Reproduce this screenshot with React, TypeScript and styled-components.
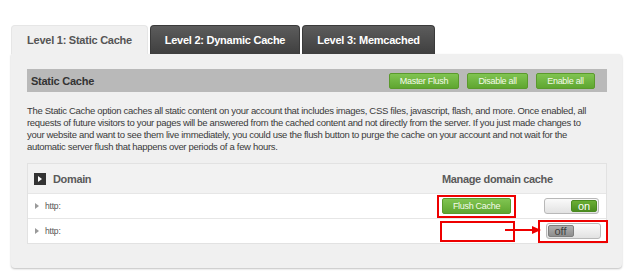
import React from "react";
import styled, { createGlobalStyle } from "styled-components";

const GlobalStyle = createGlobalStyle`
  html, body {
    margin: 0;
    padding: 0;
    background: #ffffff;
    font-family: "Liberation Sans", Arial, sans-serif;
  }
`;

const Page = styled.div`
  padding: 25px 0 0 11px;
  width: 640px;
  height: 273px;
  box-sizing: border-box;
  overflow: hidden;
`;

const TabRow = styled.div`
  display: flex;
  gap: 2px;
`;

const Tab = styled.div<{ $active?: boolean; $width: number }>`
  width: ${({ $width }) => $width}px;
  height: 29px;
  box-sizing: border-box;
  display: flex;
  align-items: center;
  justify-content: center;
  border-radius: 4px 4px 0 0;
  font-size: 11px;
  letter-spacing: -0.25px;
  font-weight: bold;
  color: ${({ $active }) => ($active ? "#555555" : "#ffffff")};
  background: ${({ $active }) =>
    $active ? "#f0f0f0" : "linear-gradient(to bottom, #5c5c5c, #3f3f3f)"};
  border: 1px solid ${({ $active }) => ($active ? "#e6e6e6" : "#3a3a3a")};
  border-bottom: none;
`;

const Panel = styled.div`
  width: 611px;
  box-sizing: border-box;
  background: #f0f0f0;
  padding: 15px 15px 24px 16px;
  border-radius: 0 4px 4px 4px;
  box-shadow: 0 1px 2px rgba(0, 0, 0, 0.25);
`;

const HeaderBar = styled.div`
  height: 23px;
  background: #b9b9b9;
  display: flex;
  align-items: center;
  justify-content: space-between;
  padding: 0 12px 0 4px;
`;

const BarTitle = styled.div`
  font-size: 11px;
  letter-spacing: -0.25px;
  font-weight: bold;
  color: #333333;
`;

const BarButtons = styled.div`
  display: flex;
  gap: 8px;
`;

const GreenButton = styled.button<{ $width: number }>`
  width: ${({ $width }) => $width}px;
  height: 16px;
  padding: 0;
  border: 1px solid #5a9a2c;
  border-radius: 2px;
  background: linear-gradient(to bottom, #80c451, #5fa630);
  color: #f4fbe9;
  font-family: "Liberation Sans", Arial, sans-serif;
  font-size: 9px;
  letter-spacing: -0.3px;
  line-height: 14px;
  cursor: pointer;
`;

const Description = styled.p`
  margin: 13px 0 0;
  padding: 0;
  font-size: 9.5px;
  letter-spacing: -0.31px;
  line-height: 12px;
  color: #3a3a3a;
`;

const Table = styled.div`
  margin-top: 10px;
  border: 1px solid #e2e2e2;
  background: #ffffff;
`;

const Row = styled.div<{ $head?: boolean }>`
  position: relative;
  display: grid;
  grid-template-columns: 409px 79px 1fr;
  align-items: center;
  height: ${({ $head }) => ($head ? 29 : 24)}px;
  background: ${({ $head }) => ($head ? "#f2f2f2" : "#ffffff")};
  border-top: ${({ $head }) => ($head ? "none" : "1px solid #e6e6e6")};
`;

const DomainCell = styled.div`
  display: flex;
  align-items: center;
  padding-left: 6px;
`;

const HeadIcon = styled.span`
  width: 12px;
  height: 12px;
  background: #333333;
  display: flex;
  align-items: center;
  justify-content: center;
  margin-right: 7px;
`;

const HeadText = styled.span`
  font-size: 11px;
  letter-spacing: -0.35px;
  font-weight: bold;
  color: #5a5a5a;
`;

const ManageHead = styled(HeadText)`
  grid-column: 2 / 4;
  padding-left: 5px;
`;

const Caret = styled.span`
  width: 0;
  height: 0;
  border-top: 3.5px solid transparent;
  border-bottom: 3.5px solid transparent;
  border-left: 4px solid #9a9a9a;
  margin: 0 6px 0 1px;
`;

const Url = styled.span`
  font-size: 8.5px;
  letter-spacing: -0.2px;
  color: #555555;
`;

const RedBox = styled.div<{ $w: number; $h: number }>`
  width: ${({ $w }) => $w}px;
  height: ${({ $h }) => $h}px;
  box-sizing: border-box;
  border: 2px solid #ee0000;
  display: flex;
  align-items: center;
  justify-content: center;
`;

const ToggleCell = styled.div`
  display: flex;
  align-items: center;
  padding-left: 28px;
`;

const ToggleBoxed = styled(RedBox)`
  margin-left: -6px;
`;

const Toggle = styled.div<{ $on: boolean }>`
  width: 55px;
  height: 16px;
  box-sizing: border-box;
  border: 1px solid #b8b8b8;
  border-radius: 3px;
  background: linear-gradient(to bottom, #fafafa, #e2e2e2);
  display: flex;
  justify-content: ${({ $on }) => ($on ? "flex-end" : "flex-start")};
  padding: 1px;
`;

const Knob = styled.div<{ $on: boolean }>`
  width: 26px;
  height: 100%;
  border-radius: 2px;
  display: flex;
  align-items: center;
  justify-content: center;
  font-size: 11px;
  line-height: 1;
  color: ${({ $on }) => ($on ? "#ffffff" : "#3f3f3f")};
  background: ${({ $on }) =>
    $on
      ? "linear-gradient(to bottom, #6aae35, #4b8d1f)"
      : "linear-gradient(to bottom, #b0b0b0, #8e8e8e)"};
  border: 1px solid ${({ $on }) => ($on ? "#4a8a20" : "#7f7f7f")};
  box-sizing: border-box;
`;

const Arrow = styled.svg`
  position: absolute;
  left: 477px;
  top: 6px;
`;

const App: React.FC = () => {
  return (
    <>
      <GlobalStyle />
      <Page>
        <TabRow>
          <Tab $active $width={137}>Level 1: Static Cache</Tab>
          <Tab $width={150}>Level 2: Dynamic Cache</Tab>
          <Tab $width={133}>Level 3: Memcached</Tab>
        </TabRow>
        <Panel>
          <HeaderBar>
            <BarTitle>Static Cache</BarTitle>
            <BarButtons>
              <GreenButton $width={70}>Master Flush</GreenButton>
              <GreenButton $width={61}>Disable all</GreenButton>
              <GreenButton $width={59}>Enable all</GreenButton>
            </BarButtons>
          </HeaderBar>
          <Description>
            The Static Cache option caches all static content on your account that includes images, CSS files,
            javascript, flash, and more. Once enabled, all requests of future visitors to your pages will be answered
            from the cached content and not directly from the server. If you just made changes to
            <br />
            your website and want to see them live immediately, you could use the flush button to purge the cache on
            your account and not wait for the
            <br />
            automatic server flush that happens over periods of a few hours.
          </Description>
          <Table>
            <Row $head>
              <DomainCell>
                <HeadIcon>
                  <svg width="4" height="6" viewBox="0 0 4 6">
                    <path d="M0 0 L4 3 L0 6 Z" fill="#ffffff" />
                  </svg>
                </HeadIcon>
                <HeadText>Domain</HeadText>
              </DomainCell>
              <ManageHead>Manage domain cache</ManageHead>
            </Row>
            <Row>
              <DomainCell>
                <Caret />
                <Url>http:</Url>
              </DomainCell>
              <RedBox $w={79} $h={23}>
                <GreenButton $width={69}>Flush Cache</GreenButton>
              </RedBox>
              <ToggleCell>
                <Toggle $on>
                  <Knob $on>on</Knob>
                </Toggle>
              </ToggleCell>
            </Row>
            <Row>
              <DomainCell>
                <Caret />
                <Url>http:</Url>
              </DomainCell>
              <RedBox $w={75} $h={21} style={{ marginLeft: 3 }} />
              <ToggleCell>
                <ToggleBoxed $w={70} $h={23}>
                  <Toggle $on={false}>
                    <Knob $on={false}>off</Knob>
                  </Toggle>
                </ToggleBoxed>
              </ToggleCell>
              <Arrow width="36" height="10" viewBox="0 0 36 10">
                <line x1="0" y1="5" x2="29" y2="5" stroke="#ee0000" strokeWidth="2" />
                <path d="M27 1 L36 5 L27 9 Z" fill="#ee0000" />
              </Arrow>
            </Row>
          </Table>
        </Panel>
      </Page>
    </>
  );
};

export default App;
